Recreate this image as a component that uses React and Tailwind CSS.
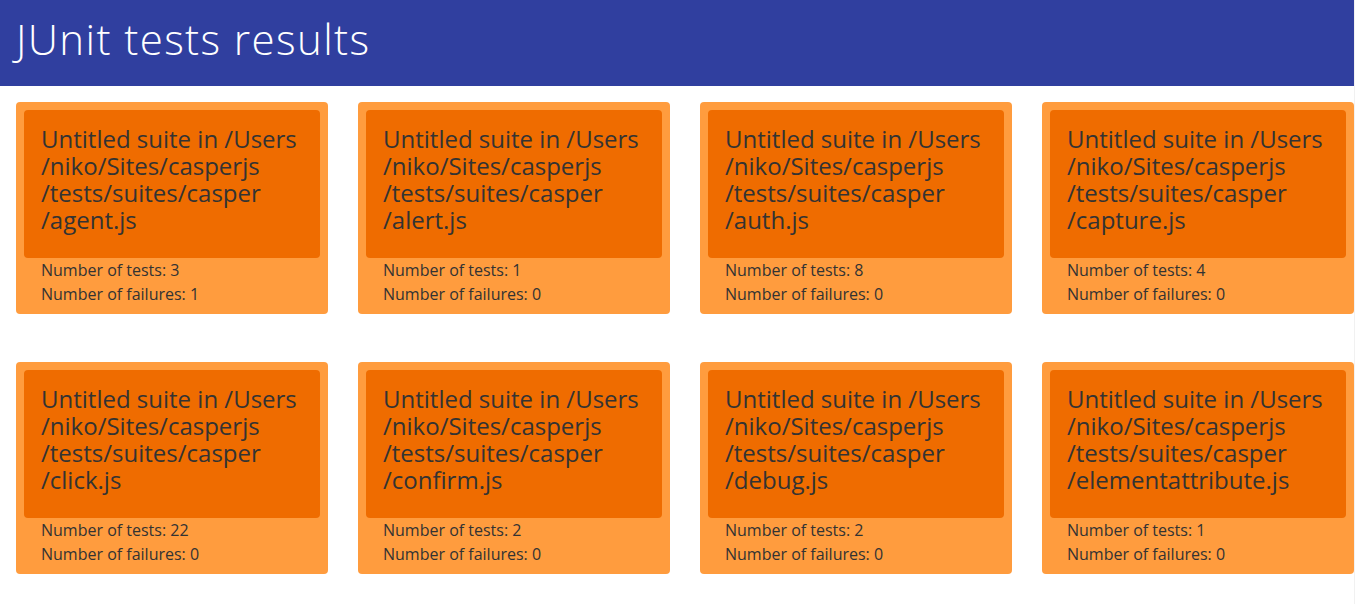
import React from "react";

const suites = [
  { name: "agent.js", tests: 3, failures: 1 },
  { name: "alert.js", tests: 1, failures: 0 },
  { name: "auth.js", tests: 8, failures: 0 },
  { name: "capture.js", tests: 4, failures: 0 },
  { name: "click.js", tests: 22, failures: 0 },
  { name: "confirm.js", tests: 2, failures: 0 },
  { name: "debug.js", tests: 2, failures: 0 },
  { name: "elementattribute.js", tests: 1, failures: 0 },
];

function Card({ s }) {
  return (
    <div className="rounded bg-[#FF9C3E] p-2">
      <div className="h-[148px] rounded bg-[#EF6C00] px-[17px] pt-[15px] text-[24px] leading-[27px] text-[#333]">
        <div className="whitespace-nowrap">Untitled suite in /Users</div>
        <div className="whitespace-nowrap">/niko/Sites/casperjs</div>
        <div className="whitespace-nowrap">/tests/suites/casper</div>
        <div className="whitespace-nowrap">/{s.name}</div>
      </div>
      <div className="px-[17px] text-[16px] leading-[24px] text-[#333]">
        <div>Number of tests: {s.tests}</div>
        <div>Number of failures: {s.failures}</div>
      </div>
    </div>
  );
}

export default function App() {
  return (
    <div
      className="flex min-h-[604px] bg-white"
      style={{ fontFamily: '"Open Sans", "Noto Sans", sans-serif' }}
    >
      <div className="w-[1354px]">
        <header className="flex h-[86px] items-center bg-[#303F9F] px-4 pb-[9px]">
          <h1 className="text-[42px] font-light leading-none tracking-[1.4px] text-white">JUnit tests results</h1>
        </header>
        <main className="grid grid-cols-[repeat(4,312px)] gap-x-[30px] gap-y-[48px] pl-4 pt-4">
          {suites.map((s) => (
            <Card key={s.name} s={s} />
          ))}
        </main>
      </div>
      <div className="w-px bg-[#f1f1f1]" />
    </div>
  );
}
